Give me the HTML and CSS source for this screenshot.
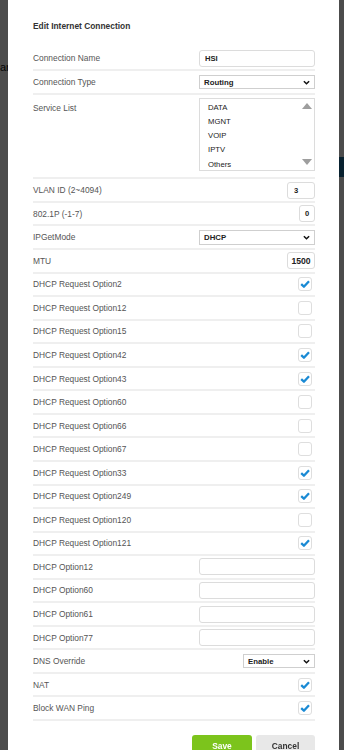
FILE: index.html
```html
<!DOCTYPE html>
<html lang="en">
<head>
  <meta charset="UTF-8">
  <meta name="viewport" content="width=device-width, initial-scale=1.0">
  <title>Edit Internet Connection</title>
  <link rel="stylesheet" href="styles.css">
</head>
<body>
  <!-- Страница под затемнением -->
  <div class="page">
    <div class="page-head">an</div>
    <div class="page-btn"></div>
  </div>

  <!-- Затемнение с модальным окном -->
  <div class="overlay">
    <div class="modal">
      <h2 class="modal-title">Edit Internet Connection</h2>

      <div class="form">
        <div class="form-row row-first">
          <span class="form-label">Connection Name</span>
          <input class="field" type="text" value="HSI">
        </div>
        <div class="form-row row-first">
          <span class="form-label">Connection Type</span>
          <div class="select"><span>Routing</span><svg class="chevron" viewBox="0 0 8 5"><polyline points="1,1 4,4 7,1"/></svg></div>
        </div>
        <div class="form-row row-list">
          <span class="form-label">Service List</span>
          <div class="listbox">
            <div class="list-items">
              <div>DATA</div>
              <div>MGNT</div>
              <div>VOIP</div>
              <div>IPTV</div>
              <div>Others</div>
            </div>
            <div class="list-scroll">
              <span class="arrow-up"></span>
              <span class="arrow-down"></span>
            </div>
          </div>
        </div>
        <div class="form-row">
          <span class="form-label">VLAN ID (2~4094)</span>
          <input class="field field-num" type="text" value="3">
        </div>
        <div class="form-row">
          <span class="form-label">802.1P (-1-7)</span>
          <input class="field field-tiny" type="text" value="0">
        </div>
        <div class="form-row">
          <span class="form-label">IPGetMode</span>
          <div class="select"><span>DHCP</span><svg class="chevron" viewBox="0 0 8 5"><polyline points="1,1 4,4 7,1"/></svg></div>
        </div>
        <div class="form-row">
          <span class="form-label">MTU</span>
          <input class="field field-mtu" type="text" value="1500">
        </div>

        <!-- Опции DHCP -->
        <div class="form-row">
          <span class="form-label">DHCP Request Option2</span>
          <span class="check"><svg viewBox="0 0 12 12"><path d="M2.2 6.2 L4.9 8.7 L10 3.2"/></svg></span>
        </div>
        <div class="form-row">
          <span class="form-label">DHCP Request Option12</span>
          <span class="check"></span>
        </div>
        <div class="form-row">
          <span class="form-label">DHCP Request Option15</span>
          <span class="check"></span>
        </div>
        <div class="form-row">
          <span class="form-label">DHCP Request Option42</span>
          <span class="check"><svg viewBox="0 0 12 12"><path d="M2.2 6.2 L4.9 8.7 L10 3.2"/></svg></span>
        </div>
        <div class="form-row">
          <span class="form-label">DHCP Request Option43</span>
          <span class="check"><svg viewBox="0 0 12 12"><path d="M2.2 6.2 L4.9 8.7 L10 3.2"/></svg></span>
        </div>
        <div class="form-row">
          <span class="form-label">DHCP Request Option60</span>
          <span class="check"></span>
        </div>
        <div class="form-row">
          <span class="form-label">DHCP Request Option66</span>
          <span class="check"></span>
        </div>
        <div class="form-row">
          <span class="form-label">DHCP Request Option67</span>
          <span class="check"></span>
        </div>
        <div class="form-row">
          <span class="form-label">DHCP Request Option33</span>
          <span class="check"><svg viewBox="0 0 12 12"><path d="M2.2 6.2 L4.9 8.7 L10 3.2"/></svg></span>
        </div>
        <div class="form-row">
          <span class="form-label">DHCP Request Option249</span>
          <span class="check"><svg viewBox="0 0 12 12"><path d="M2.2 6.2 L4.9 8.7 L10 3.2"/></svg></span>
        </div>
        <div class="form-row">
          <span class="form-label">DHCP Request Option120</span>
          <span class="check"></span>
        </div>
        <div class="form-row">
          <span class="form-label">DHCP Request Option121</span>
          <span class="check"><svg viewBox="0 0 12 12"><path d="M2.2 6.2 L4.9 8.7 L10 3.2"/></svg></span>
        </div>
        <div class="form-row">
          <span class="form-label">DHCP Option12</span>
          <input class="field" type="text" value="">
        </div>
        <div class="form-row">
          <span class="form-label">DHCP Option60</span>
          <input class="field" type="text" value="">
        </div>
        <div class="form-row">
          <span class="form-label">DHCP Option61</span>
          <input class="field" type="text" value="">
        </div>
        <div class="form-row">
          <span class="form-label">DHCP Option77</span>
          <input class="field" type="text" value="">
        </div>
        <div class="form-row">
          <span class="form-label">DNS Override</span>
          <div class="select select-sm"><span>Enable</span><svg class="chevron" viewBox="0 0 8 5"><polyline points="1,1 4,4 7,1"/></svg></div>
        </div>
        <div class="form-row">
          <span class="form-label">NAT</span>
          <span class="check"><svg viewBox="0 0 12 12"><path d="M2.2 6.2 L4.9 8.7 L10 3.2"/></svg></span>
        </div>
        <div class="form-row">
          <span class="form-label">Block WAN Ping</span>
          <span class="check"><svg viewBox="0 0 12 12"><path d="M2.2 6.2 L4.9 8.7 L10 3.2"/></svg></span>
        </div>
      </div>

      <!-- Кнопки -->
      <div class="actions">
        <button class="btn btn-save">Save</button>
        <button class="btn btn-cancel">Cancel</button>
      </div>
    </div>
  </div>
</body>
</html>
```

FILE: styles.css
```css
/* Вся страница */
body {
  margin: 0;
  height: 750px;
  overflow: hidden;
  font-family: "Liberation Sans", Arial, sans-serif;
  background: #fff;
}

/* Страница под затемнением */
.page {
  padding-top: 61px;
}

.page-head {
  font-size: 11px;
  line-height: 13px;
  color: #111;
}

.page-btn {
  margin: 83px 0 0 336px;
  width: 8px;
  height: 20px;
  background: #1b6f9e;
}

/* Затемнение */
.overlay {
  position: fixed;
  inset: 0;
  background: rgba(0, 0, 0, 0.7);
  padding: 0 5px 0 8px;
}

/* Модальное окно */
.modal {
  height: 100%;
  box-sizing: border-box;
  background: #fff;
  padding: 21px 24px 0 25px;
}

.modal-title {
  margin: 0 0 16px;
  font-size: 8.4px;
  line-height: 10px;
  font-weight: bold;
  color: #333;
}

/* Строка формы */
.form-row {
  display: flex;
  align-items: center;
  justify-content: space-between;
  height: 21.55px;
  border-bottom: 2px solid #efefef;
}

.row-first {
  height: 22px;
}

.row-list {
  height: 79.4px;
  padding-top: 3px;
  align-items: flex-start;
}

.row-list .form-label {
  margin-top: 5px;
}

.form-label {
  font-size: 8.4px;
  line-height: 10px;
  color: #555;
}

/* Поля ввода */
.field {
  width: 116px;
  height: 17px;
  box-sizing: border-box;
  border: 1px solid #dcdcdc;
  border-radius: 3px;
  padding: 0 5px;
  font-family: "Liberation Sans", Arial, sans-serif;
  font-size: 7.6px;
  font-weight: bold;
  color: #222;
  outline: none;
}

.field-num {
  width: 28px;
  padding: 0 6px;
}

.field-tiny {
  width: 16px;
  padding: 0;
  text-align: center;
}

.field-mtu {
  width: 28px;
  padding: 0 1px;
  font-size: 8.6px;
  text-align: center;
}

/* Выпадающий список */
.select {
  width: 116px;
  height: 14.5px;
  box-sizing: border-box;
  border: 1px solid #cfcfcf;
  display: flex;
  align-items: center;
  justify-content: space-between;
  padding: 0 4px;
  font-size: 7.8px;
  font-weight: bold;
  color: #222;
}

.select-sm {
  width: 72px;
}

.chevron {
  width: 7px;
  height: 5px;
  fill: none;
  stroke: #111;
  stroke-width: 1.7;
}

/* Список сервисов */
.listbox {
  width: 116px;
  height: 73px;
  box-sizing: border-box;
  border: 1px solid #dcdcdc;
  display: flex;
  justify-content: space-between;
}

.list-items {
  padding: 1.5px 0 0 8px;
  font-size: 7.7px;
  line-height: 14.3px;
  color: #222;
}

.list-scroll {
  display: flex;
  flex-direction: column;
  justify-content: space-between;
  padding: 4px 2px 5px 0;
}

.arrow-up,
.arrow-down {
  width: 0;
  height: 0;
  border-left: 5px solid transparent;
  border-right: 5px solid transparent;
}

.arrow-up {
  border-bottom: 6px solid #9e9e9e;
}

.arrow-down {
  border-top: 6px solid #9e9e9e;
}

/* Чекбокс */
.check {
  width: 14px;
  height: 14px;
  box-sizing: border-box;
  border: 1px solid #dedede;
  border-radius: 3px;
  margin-right: 3px;
  display: flex;
}

.check svg {
  width: 12px;
  height: 12px;
  fill: none;
  stroke: #1a8ad4;
  stroke-width: 2.3;
  stroke-linejoin: round;
}

/* Кнопки */
.actions {
  display: flex;
  justify-content: flex-end;
  gap: 4px;
  margin-top: 14px;
}

.btn {
  width: 60px;
  height: 22px;
  border: none;
  border-radius: 3px;
  font-family: "Liberation Sans", Arial, sans-serif;
  font-size: 8.4px;
  font-weight: bold;
  cursor: pointer;
}

.btn-save {
  background: #7cc41c;
  color: #fff;
}

.btn-cancel {
  width: 59px;
  background: #e8e8e8;
  color: #333;
}
```
